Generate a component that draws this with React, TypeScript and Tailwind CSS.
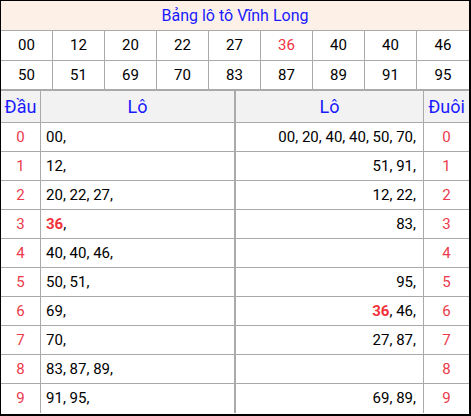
import React from "react";

const top1 = ["00", "12", "20", "22", "27", "36", "40", "40", "46"];
const top2 = ["50", "51", "69", "70", "83", "87", "89", "91", "95"];

type Part = { v: string; hot?: boolean };
const dau: Part[][] = [
  [{ v: "00" }],
  [{ v: "12" }],
  [{ v: "20" }, { v: "22" }, { v: "27" }],
  [{ v: "36", hot: true }],
  [{ v: "40" }, { v: "40" }, { v: "46" }],
  [{ v: "50" }, { v: "51" }],
  [{ v: "69" }],
  [{ v: "70" }],
  [{ v: "83" }, { v: "87" }, { v: "89" }],
  [{ v: "91" }, { v: "95" }],
];
const duoi: Part[][] = [
  [{ v: "00" }, { v: "20" }, { v: "40" }, { v: "40" }, { v: "50" }, { v: "70" }],
  [{ v: "51" }, { v: "91" }],
  [{ v: "12" }, { v: "22" }],
  [{ v: "83" }],
  [],
  [{ v: "95" }],
  [{ v: "36", hot: true }, { v: "46" }],
  [{ v: "27" }, { v: "87" }],
  [],
  [{ v: "69" }, { v: "89" }],
];

function Parts({ parts }: { parts: Part[] }) {
  return (
    <span className="whitespace-pre">
      {parts.map((p, i) => (
        <React.Fragment key={i}>
          {i > 0 ? " " : ""}
          {p.hot ? <span className="font-bold text-[#f0323c]">{p.v}</span> : p.v}
          ,
        </React.Fragment>
      ))}
    </span>
  );
}

export default function App() {
  return (
    <div
      className="w-[471px] h-[416px] bg-white border-l border-t border-r-2 border-b-2 border-black text-black overflow-hidden"
      style={{ fontFamily: "Roboto, 'Noto Sans', sans-serif" }}
    >
      <div className="h-[30px] bg-[#fdf1e7] border-b border-[#aaaaaa] flex items-center justify-center text-[16px] text-[#1a1aff]">
        Bảng lô tô Vĩnh Long
      </div>
      {[top1, top2].map((row, r) => (
        <div
          key={r}
          className={`grid grid-cols-9 h-[30px] ${r === 1 ? "border-b-2" : "border-b"} border-[#aaaaaa]`}
        >
          {row.map((n, i) => (
            <div
              key={i}
              className={`flex items-center justify-center text-[15px] ${i < 8 ? "border-r border-[#aaaaaa]" : ""} ${n === "36" && r === 0 ? "text-[#f0323c]" : ""}`}
            >
              {n}
            </div>
          ))}
        </div>
      ))}
      <div className="flex h-[32px] bg-[#f2f2f2] border-b border-[#aaaaaa] text-[#1a1aff] text-[18px]">
        <div className="w-[40px] border-r border-[#aaaaaa] flex items-center justify-center">Đầu</div>
        <div className="w-[195px] border-r-2 border-[#aaaaaa] flex items-center justify-center">Lô</div>
        <div className="w-[188px] border-r border-[#aaaaaa] flex items-center justify-center">Lô</div>
        <div className="flex-1 flex items-center justify-center">Đuôi</div>
      </div>
      {dau.map((parts, i) => (
        <div key={i} className={`flex h-[29px] text-[15px] ${i < 9 ? "border-b border-[#aaaaaa]" : ""}`}>
          <div className="w-[40px] border-r border-[#aaaaaa] flex items-center justify-center text-[#ec3a4c]">{i}</div>
          <div className="w-[195px] border-r-2 border-[#aaaaaa] flex items-center pl-[5px]">
            <Parts parts={parts} />
          </div>
          <div className="w-[188px] border-r border-[#aaaaaa] flex items-center justify-end pr-[7px]">
            <Parts parts={duoi[i]} />
          </div>
          <div className="flex-1 flex items-center justify-center text-[#ec3a4c]">{i}</div>
        </div>
      ))}
    </div>
  );
}
